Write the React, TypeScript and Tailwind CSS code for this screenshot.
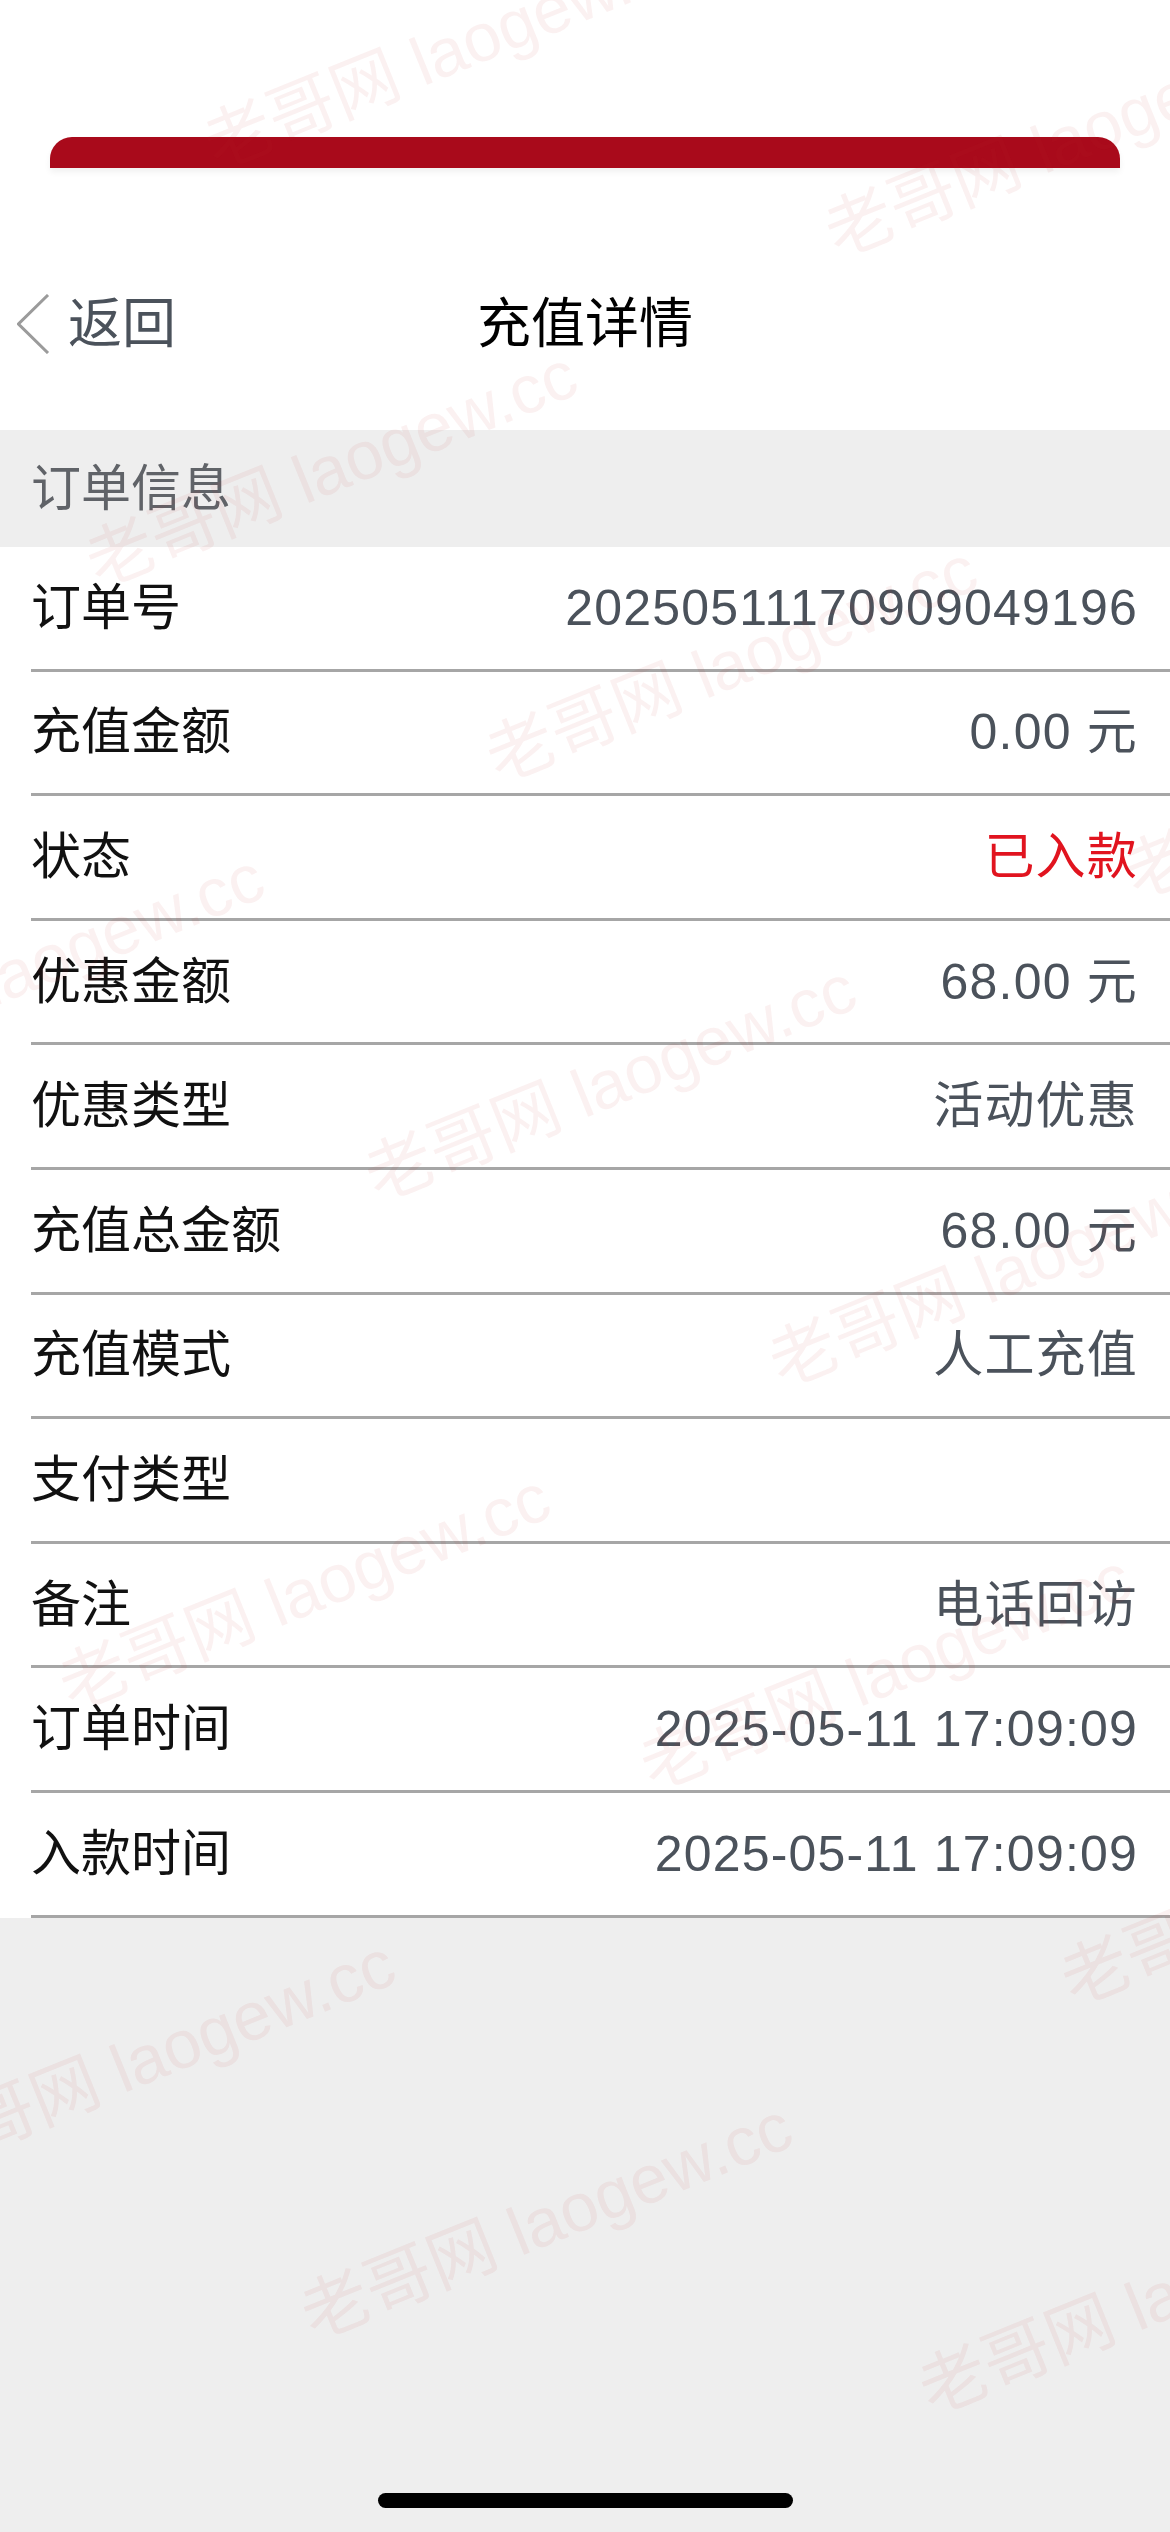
import React from 'react';

const rows: { label: string; value: string; red?: boolean }[] = [
  { label: '订单号', value: '20250511170909049196' },
  { label: '充值金额', value: '0.00 元' },
  { label: '状态', value: '已入款', red: true },
  { label: '优惠金额', value: '68.00 元' },
  { label: '优惠类型', value: '活动优惠' },
  { label: '充值总金额', value: '68.00 元' },
  { label: '充值模式', value: '人工充值' },
  { label: '支付类型', value: '' },
  { label: '备注', value: '电话回访' },
  { label: '订单时间', value: '2025-05-11 17:09:09' },
  { label: '入款时间', value: '2025-05-11 17:09:09' },
];

// watermark centres, measured off the screenshot
const marks: [number, number][] = [
  [449, 50],
  [1070, 138],
  [331, 468],
  [731, 663],
  [18, 971],
  [1369, 780],
  [610, 1082],
  [1014, 1268],
  [304, 1591],
  [885, 1671],
  [149, 2057],
  [546, 2220],
  [1306, 1886],
  [1164, 2295],
];

const font = { fontFamily: '"Liberation Sans", "Noto Sans CJK SC", sans-serif' };

const Row = ({ label, value, red }: { label: string; value: string; red?: boolean }) => (
  <div className="ml-[31px] flex h-[124.6px] items-center justify-between border-b-[3px] border-[#a6a6a6] pr-[32px]">
    <span className="text-[50px] leading-none text-[#111111]">{label}</span>
    <span className={`text-[50px] leading-none tracking-[1.2px] ${red ? 'text-[#e1141f]' : 'text-[#4b525b]'}`}>{value}</span>
  </div>
);

export default function App() {
  return (
    <div className="relative flex h-[2532px] w-[1170px] flex-col overflow-hidden bg-white" style={font}>
      <div className="h-[137px]" />
      <div className="mx-[50px] h-[31px] rounded-t-[22px] bg-[#a90a1b] shadow-[0_4px_6px_rgba(0,0,0,0.06)]" />

      <div className="h-[100px]" />
      <div className="grid h-[112px] grid-cols-3 items-center px-[17px]">
        <div className="flex items-center gap-[18px]">
          <svg width="33" height="60" viewBox="0 0 33 60" fill="none">
            <polyline points="31,1 1.5,30 31,59" stroke="#9b9b9b" strokeWidth="3" strokeLinejoin="miter" />
          </svg>
          <span className="text-[54px] leading-none text-[#4b525b]">返回</span>
        </div>
        <div className="text-center text-[54px] leading-none text-black">充值详情</div>
        <div />
      </div>
      <div className="h-[50px]" />

      <div className="flex h-[117px] items-center bg-[#eeeeee] pl-[31px]">
        <span className="text-[50px] leading-none text-[#606368]">订单信息</span>
      </div>

      <div className="bg-white">
        {rows.map((r) => (
          <Row key={r.label} {...r} />
        ))}
      </div>

      <div className="flex flex-1 flex-col items-center justify-end bg-[#eeeeee] pb-[24px]">
        <div className="h-[15px] w-[415px] rounded-full bg-black" />
      </div>

      <div className="pointer-events-none absolute inset-0">
        {marks.map(([x, y], i) => (
          <span
            key={i}
            className="absolute -translate-x-1/2 -translate-y-1/2 -rotate-[22deg] whitespace-nowrap text-[68px] leading-none text-[rgba(190,40,40,0.065)]"
            style={{ left: x, top: y }}
          >
            老哥网 laogew.cc
          </span>
        ))}
      </div>
    </div>
  );
}
